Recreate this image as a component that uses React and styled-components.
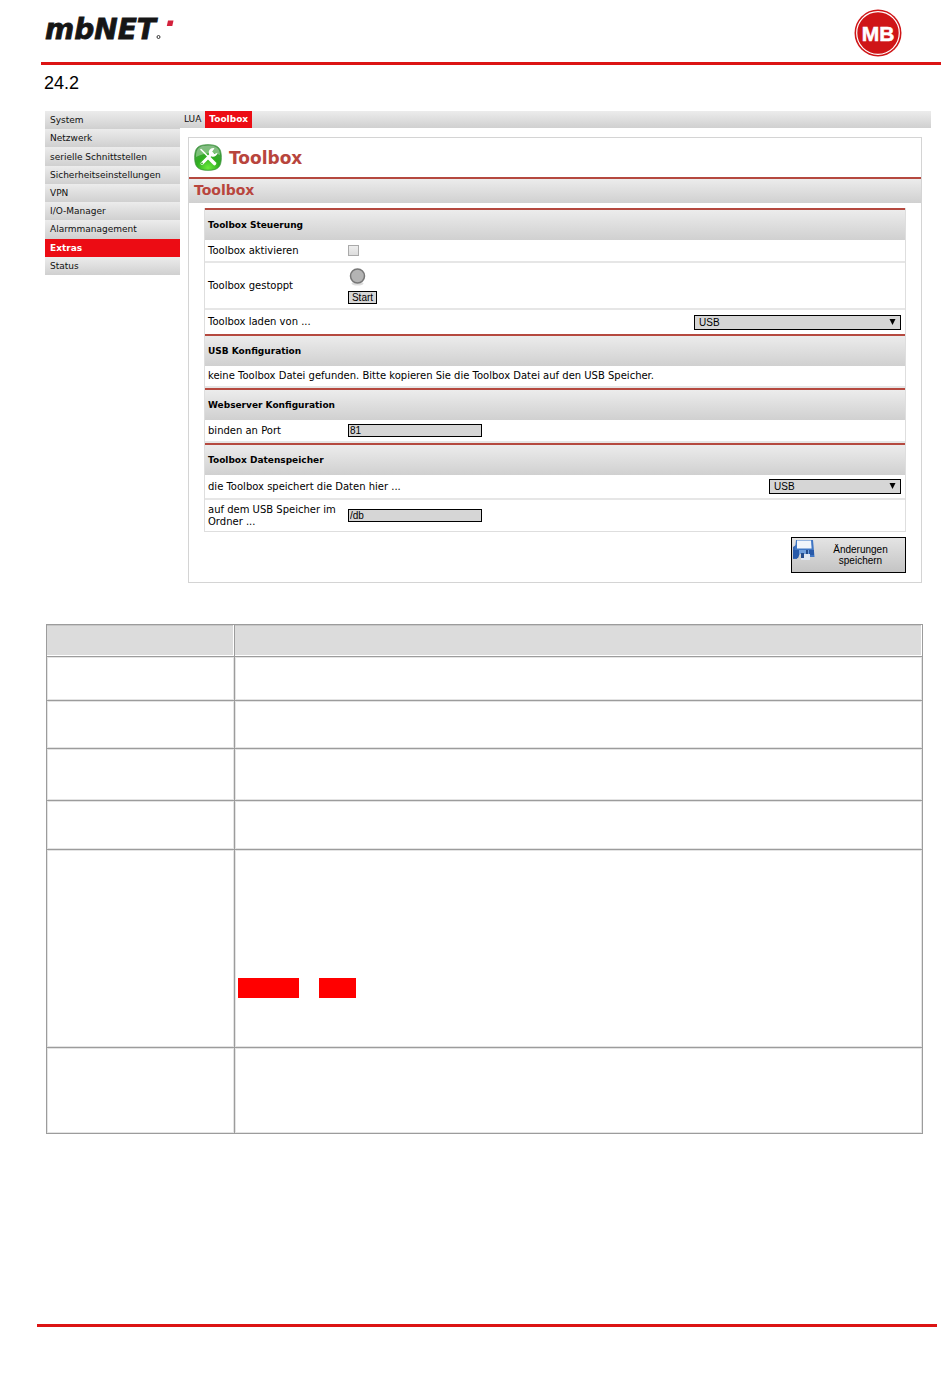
import React, { useState } from 'react';
import styled, { createGlobalStyle, css } from 'styled-components';

const GlobalStyle = createGlobalStyle`
    * {
        box-sizing: border-box;
    }
    body {
        margin: 0;
        background: #fff;
        color: #000;
        font-family: "DejaVu Sans", Verdana, sans-serif;
        font-size: 10px;
    }
`;

const barGradient = css`
    background: linear-gradient(#ececec, #d0d0d0);
`;

const Page = styled.div`
    display: flex;
    flex-direction: column;
    min-height: 100vh;
    padding-bottom: 51px;
`;
const PageHeader = styled.header`
    display: flex;
    justify-content: space-between;
    align-items: flex-start;
    height: 65px;
    margin: 0 9px 0 41px;
    padding: 9px 39px 0 4px;
    border-bottom: 3px solid #dc1414;
`;
const BrandLogo = styled.svg`
    display: block;
`;
const SectionNumber = styled.h1`
    margin: 8px 0 0 44px;
    font: 400 18px/20px "Liberation Sans", Arial, sans-serif;
`;
const Device = styled.section`
    display: flex;
    align-items: flex-start;
    margin: 18px 19px 0 45px;
`;
const Menu = styled.nav`
    display: grid;
    grid-template-rows: repeat(9, 1fr);
    width: 135px;
    height: 164px;
    flex-shrink: 0;
`;
const MenuLink = styled.a`
    display: flex;
    align-items: center;
    padding-left: 5px;
    font-size: 9px;
    color: #111;
    text-decoration: none;
    ${barGradient}
    ${({ $active }) => $active && css`
        background: #ec0c14;
        color: #fff;
        font-weight: 700;
    `}
`;
const Content = styled.main`
    flex: 1;
`;
const Tabs = styled.nav`
    display: flex;
    height: 17px;
    ${barGradient}
`;
const Tab = styled.a`
    padding: 0 4px;
    font-size: 9px;
    line-height: 17px;
    color: #111;
    text-decoration: none;
    ${({ $active }) => $active && css`
        background: #ec0c14;
        color: #fff;
        font-weight: 700;
    `}
`;
const Panel = styled.form`
    margin: 9px 9px 0 8px;
    padding-bottom: 9px;
    border: 1px solid #d4d4d4;
`;
const PanelTitle = styled.h2`
    display: flex;
    align-items: center;
    gap: 7px;
    height: 39px;
    margin: 0;
    padding-left: 5px;
    font-size: 17px;
    color: #b8453d;
`;
const PanelSubtitle = styled.h3`
    height: 26px;
    margin: 0;
    padding-left: 5px;
    border-top: 2px solid #b5493f;
    font-size: 14px;
    line-height: 22px;
    color: #b8453d;
    ${barGradient}
`;
const Settings = styled.div`
    margin: 5px 15px 0;
    border: solid #dedede;
    border-width: 0 1px 1px;
`;
const GroupTitle = styled.h4`
    height: 32px;
    margin: 0;
    padding-left: 3px;
    border-top: 2px solid #b5493f;
    font-size: 9px;
    line-height: 30px;
    ${barGradient}
`;
const Row = styled.div`
    display: flex;
    align-items: center;
    min-height: ${({ $height }) => $height}px;
    padding: 0 4px 0 3px;
    border-bottom: ${({ $last }) => ($last ? 0 : 2)}px solid #e6e6e6;
`;
const Label = styled.label`
    width: ${({ $wide }) => ($wide ? 'auto' : '140px')};
    margin-right: ${({ $wide }) => ($wide ? 'auto' : '0')};
    line-height: 12px;
`;
const Message = styled.p`
    margin: 0;
    line-height: 12px;
`;
const CheckBox = styled.input`
    appearance: none;
    width: 11px;
    height: 11px;
    margin: 0;
    border: 1px solid #aaa;
    background: linear-gradient(#eee, #ddd);
    &:checked {
        background: #555;
    }
`;
const Status = styled.div`
    display: flex;
    flex-direction: column;
    align-items: flex-start;
    gap: 5px;
`;
const StatusLamp = styled.svg`
    display: block;
    margin-left: 1px;
`;
const StartButton = styled.button`
    width: 29px;
    height: 13px;
    padding: 0;
    border: 1px solid #000;
    background: #d6d6d6;
    font: 10px/11px "Liberation Sans", Arial, sans-serif;
`;
const TextInput = styled.input`
    width: 134px;
    height: 13px;
    padding: 0 1px;
    border: 1px solid #000;
    border-radius: 0;
    background: #d6d6d6;
    font: 10px/11px "Liberation Sans", Arial, sans-serif;
`;
const SelectBox = styled.div`
    position: relative;
    width: ${({ $width }) => $width}px;
    height: 15px;
`;
const Select = styled.select`
    appearance: none;
    display: block;
    width: 100%;
    height: 15px;
    padding: 0 4px;
    border: 1px solid #000;
    border-radius: 0;
    background: #d6d6d6;
    color: #000;
    font: 10px/13px "Liberation Sans", Arial, sans-serif;
`;
const SelectArrow = styled.svg`
    position: absolute;
    top: 4px;
    right: 5px;
    pointer-events: none;
`;
const SaveButton = styled.button`
    display: flex;
    align-items: flex-start;
    width: 115px;
    height: 36px;
    margin: 5px 15px 0 auto;
    padding: 1px 0 0;
    border: 1px solid #000;
    background: linear-gradient(#e4e4e4, #c4c4c4);
    color: #000;
    font: 10px/11px "Liberation Sans", Arial, sans-serif;
`;
const SaveText = styled.span`
    flex: 1;
    padding: 5px 12px 0;
    text-align: center;
`;
const DocTable = styled.table`
    width: calc(100% - 73px);
    margin: 41px 27px 0 46px;
    border-collapse: collapse;
    table-layout: fixed;
`;
const NameCol = styled.col`
    width: 188px;
`;
const DocRow = styled.tr`
    height: ${({ $height }) => $height}px;
`;
const cell = css`
    padding: 0 3px;
    border: 1px solid #9c9c9c;
    box-shadow: inset -1px -1px #e4e4e4, inset 1px 1px #e4e4e4;
`;
const DocHead = styled.th`
    ${cell}
    background: #dcdcdc;
    box-shadow: inset -1px -1px #fff, inset 0 1px #c6c6c6;
`;
const DocCell = styled.td`
    ${cell}
    vertical-align: top;
`;
const Marks = styled.div`
    display: flex;
    gap: 20px;
    padding-top: 128px;
`;
const Mark = styled.span`
    width: ${({ $width }) => $width}px;
    height: 20px;
    background: #f00;
`;
const FooterLine = styled.footer`
    margin: auto 13px 0 37px;
    border-top: 3px solid #dc1414;
`;

const menuItems = [
    'System', 'Netzwerk', 'serielle Schnittstellen', 'Sicherheitseinstellungen', 'VPN',
    'I/O-Manager', 'Alarmmanagement', 'Extras', 'Status',
];
const docRows = [44, 48, 52, 49, 198, 86];

const MbNetLogo = () => (
    <BrandLogo width="140" height="46" viewBox="0 0 140 46" role="img" aria-label="mbNET">
        <text x="0" y="30" fontFamily="DejaVu Sans" fontWeight="700" fontStyle="italic" fontSize="28" fill="#161616" stroke="#161616" strokeWidth="0.8">mbNET</text>
        <path d="M123 11.500h5.500l-1.200 5.500h-5.500z" fill="#d3213b" />
        <circle cx="113.500" cy="28" r="1.500" fill="none" stroke="#333" strokeWidth="1" />
    </BrandLogo>
);

const MbBadge = () => (
    <svg width="48" height="48" viewBox="0 0 48 48" role="img" aria-label="MB">
        <circle cx="24" cy="24" r="23.500" fill="#cf1517" />
        <circle cx="24" cy="24" r="21.300" fill="none" stroke="#fff" strokeWidth="1.200" />
        <text x="24" y="32" textAnchor="middle" fontFamily="Liberation Sans" fontWeight="700" fontSize="21" fill="#fff" stroke="#fff" strokeWidth="0.5">MB</text>
    </svg>
);

const ToolboxIcon = () => (
    <svg width="28" height="27" viewBox="0 0 28 27" aria-hidden="true">
        <defs>
            <radialGradient id="green" cx="0.5" cy="0.9" r="0.85">
                <stop offset="0" stopColor="#6bea3c" />
                <stop offset="0.5" stopColor="#2fae20" />
                <stop offset="1" stopColor="#4b9c4b" />
            </radialGradient>
        </defs>
        <path d="M14 .7C24 .7 27.300 4 27.300 13.500S24 26.300 14 26.300.7 23 .7 13.500 4 .7 14 .7z" fill="url(#green)" stroke="#358e35" strokeWidth="0.8" />
        <path d="M14 1.600c8.500 0 11.500 2.500 12 9.500-7-3-17-2-24 2C2 4.500 5.500 1.600 14 1.600z" fill="#fff" opacity="0.32" />
        <path d="M7 5.500l11 11" stroke="#fff" strokeWidth="1.600" strokeLinecap="round" />
        <path d="M15.500 14.500l5 5" stroke="#fff" strokeWidth="3.600" strokeLinecap="round" />
        <path d="M8 19.500l10-10" stroke="#fff" strokeWidth="3" strokeLinecap="round" />
        <path d="M20.500 4.200a4.400 4.400 0 1 0 3 4.600l-3.200 1.200-2.200-2.200z" fill="#fff" />
        <circle cx="8" cy="19.500" r="0.9" fill="#37ad27" />
    </svg>
);

const SaveIcon = () => (
    <svg width="24" height="22" viewBox="0 0 24 22" aria-hidden="true">
        <path d="M1 8l3-2V2h3v12l-2 6H1z" fill="#3768b5" />
        <path d="M4 1h17l1.500 17H17l-1-4H7l-1 5H2z" fill="#3f76c4" />
        <path d="M5 1.500h14l.6 8H5z" fill="#f0f5fb" />
        <path d="M1 11h21v5h-5l-1-2H8l-2 5H1z" fill="#285aa9" />
        <path d="M7 11h10v4H7z" fill="#6f9fdd" />
        <path d="M9 15h9v6H9z" fill="#dfe7f2" />
        <path d="M9 14h3v5H9zM14 11h2v4h-2z" fill="#254c8c" />
    </svg>
);

const DropDown = ({ id, width }) => (
    <SelectBox $width={width}>
        <Select id={id} defaultValue="USB">
            <option>USB</option>
        </Select>
        <SelectArrow width="7" height="6" viewBox="0 0 7 6" aria-hidden="true">
            <path d="M.5 0h6l-3 6z" />
        </SelectArrow>
    </SelectBox>
);

const App = () => {
    const [active, setActive] = useState(false);
    const [port, setPort] = useState('81');
    const [folder, setFolder] = useState('/db');

    return (
        <>
        <GlobalStyle />
        <Page>
            <PageHeader>
                <MbNetLogo />
                <MbBadge />
            </PageHeader>
            <SectionNumber>24.2</SectionNumber>

            <Device>
                <Menu>
                    {menuItems.map((item) => (
                        <MenuLink key={item} href="#" $active={item === 'Extras'}>{item}</MenuLink>
                    ))}
                </Menu>
                <Content>
                    <Tabs>
                        <Tab href="#">LUA</Tab>
                        <Tab href="#" $active>Toolbox</Tab>
                    </Tabs>
                    <Panel onSubmit={(e) => e.preventDefault()}>
                        <PanelTitle><ToolboxIcon />Toolbox</PanelTitle>
                        <PanelSubtitle>Toolbox</PanelSubtitle>
                        <Settings>
                            <GroupTitle>Toolbox Steuerung</GroupTitle>
                            <Row $height={23}>
                                <Label htmlFor="activate">Toolbox aktivieren</Label>
                                <CheckBox id="activate" type="checkbox" checked={active} onChange={(e) => setActive(e.target.checked)} />
                            </Row>
                            <Row $height={47}>
                                <Label htmlFor="start">Toolbox gestoppt</Label>
                                <Status>
                                    <StatusLamp width="17" height="18" viewBox="0 0 17 18" aria-hidden="true">
                                        <ellipse cx="8.500" cy="15.500" rx="6" ry="2" fill="#ddd" />
                                        <circle cx="8.500" cy="8" r="7" fill="#b4b4b4" stroke="#777" strokeWidth="1.500" />
                                    </StatusLamp>
                                    <StartButton id="start" type="button">Start</StartButton>
                                </Status>
                            </Row>
                            <Row $height={24} $last>
                                <Label $wide htmlFor="source">Toolbox laden von ...</Label>
                                <DropDown id="source" width={207} />
                            </Row>

                            <GroupTitle>USB Konfiguration</GroupTitle>
                            <Row $height={22}>
                                <Message>keine Toolbox Datei gefunden. Bitte kopieren Sie die Toolbox Datei auf den USB Speicher.</Message>
                            </Row>

                            <GroupTitle>Webserver Konfiguration</GroupTitle>
                            <Row $height={23}>
                                <Label htmlFor="port">binden an Port</Label>
                                <TextInput id="port" type="text" value={port} onChange={(e) => setPort(e.target.value)} />
                            </Row>

                            <GroupTitle>Toolbox Datenspeicher</GroupTitle>
                            <Row $height={25}>
                                <Label $wide htmlFor="target">die Toolbox speichert die Daten hier ...</Label>
                                <DropDown id="target" width={132} />
                            </Row>
                            <Row $height={31} $last>
                                <Label htmlFor="folder">auf dem USB Speicher im Ordner ...</Label>
                                <TextInput id="folder" type="text" value={folder} onChange={(e) => setFolder(e.target.value)} />
                            </Row>
                        </Settings>
                        <SaveButton type="submit">
                            <SaveIcon />
                            <SaveText>Änderungen speichern</SaveText>
                        </SaveButton>
                    </Panel>
                </Content>
            </Device>

            <DocTable>
                <colgroup>
                    <NameCol />
                    <col />
                </colgroup>
                <thead>
                    <DocRow $height={32}>
                        <DocHead />
                        <DocHead />
                    </DocRow>
                </thead>
                <tbody>
                    {docRows.map((height, id) => (
                        <DocRow key={id} $height={height}>
                            <DocCell />
                            <DocCell>
                                {height === 198 && <Marks><Mark $width={61} /><Mark $width={37} /></Marks>}
                            </DocCell>
                        </DocRow>
                    ))}
                </tbody>
            </DocTable>
            <FooterLine />
        </Page>
        </>
    );
};

export default App;
